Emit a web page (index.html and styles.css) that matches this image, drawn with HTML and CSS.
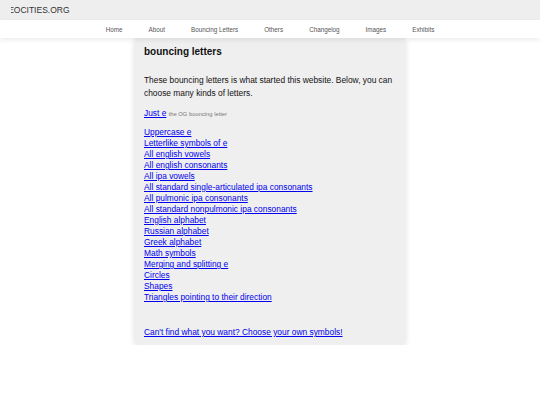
FILE: index.html
```html
<!DOCTYPE html>
<html lang="en">
<head>
    <meta charset="UTF-8">
    <meta name="viewport" content="width=device-width, initial-scale=1.0">
    <title>bouncing letters</title>
    <link rel="stylesheet" href="styles.css">
</head>
<body>
    <div class="topbar">
        <div class="brand"><span>NEOCITIES.ORG</span></div>
    </div>

    <nav class="nav">
        <a href="#">Home</a>
        <a href="#">About</a>
        <a href="#">Bouncing Letters</a>
        <a href="#">Others</a>
        <a href="#">Changelog</a>
        <a href="#">Images</a>
        <a href="#">Exhibits</a>
    </nav>

    <main class="content">
        <h1>bouncing letters</h1>
        <p class="intro">These bouncing letters is what started this website. Below, you can choose many kinds of letters.</p>

        <div class="og"><a href="#">Just e</a> <small>the OG bouncing letter</small></div>

        <ul class="letters">
            <li><a href="#">Uppercase e</a></li>
            <li><a href="#">Letterlike symbols of e</a></li>
            <li><a href="#">All english vowels</a></li>
            <li><a href="#">All english consonants</a></li>
            <li><a href="#">All ipa vowels</a></li>
            <li><a href="#">All standard single-articulated ipa consonants</a></li>
            <li><a href="#">All pulmonic ipa consonants</a></li>
            <li><a href="#">All standard nonpulmonic ipa consonants</a></li>
            <li><a href="#">English alphabet</a></li>
            <li><a href="#">Russian alphabet</a></li>
            <li><a href="#">Greek alphabet</a></li>
            <li><a href="#">Math symbols</a></li>
            <li><a href="#">Merging and splitting e</a></li>
            <li><a href="#">Circles</a></li>
            <li><a href="#">Shapes</a></li>
            <li><a href="#">Triangles pointing to their direction</a></li>
        </ul>

        <div class="custom"><a href="#">Can't find what you want? Choose your own symbols!</a></div>
    </main>
</body>
</html>
```

FILE: styles.css
```css
body {
    margin: 0;
    font-family: "Liberation Sans", Arial, sans-serif;
    background: #fff;
    color: #111;
}
a {
    color: #0000ee;
}
.topbar {
    height: 20px;
    background: #eeeeee;
    padding-left: 11px;
}
.brand {
    overflow: hidden;
    line-height: 20px;
    font-size: 8.5px;
    color: #333;
    white-space: nowrap;
}
.brand span {
    margin-left: -9px;
}
.nav {
    position: relative;
    height: 18px;
    background: #fff;
    box-shadow: 0 2px 5px rgba(0, 0, 0, 0.08);
    display: flex;
    justify-content: center;
    align-items: center;
    gap: 26px;
    z-index: 1;
}
.nav a {
    color: #555;
    font-size: 6.3px;
    text-decoration: none;
}
.content {
    width: 252px;
    margin: 0 auto;
    padding: 8px 9px 7px;
    background: #efefef;
    border-radius: 0 0 4px 4px;
    box-shadow: 0 1px 6px rgba(0, 0, 0, 0.15);
    font-size: 8.4px;
}
.content h1 {
    margin: 0;
    font-size: 10px;
    line-height: 12px;
}
.intro {
    margin: 16px 0 0;
    line-height: 13px;
}
.og {
    margin-top: 8px;
    line-height: 11px;
}
.og small {
    font-size: 5.8px;
    color: #777;
}
.letters {
    list-style: none;
    margin: 7px 0 0;
    padding: 0;
    line-height: 11px;
}
.custom {
    margin-top: 24px;
    line-height: 11px;
}
```
